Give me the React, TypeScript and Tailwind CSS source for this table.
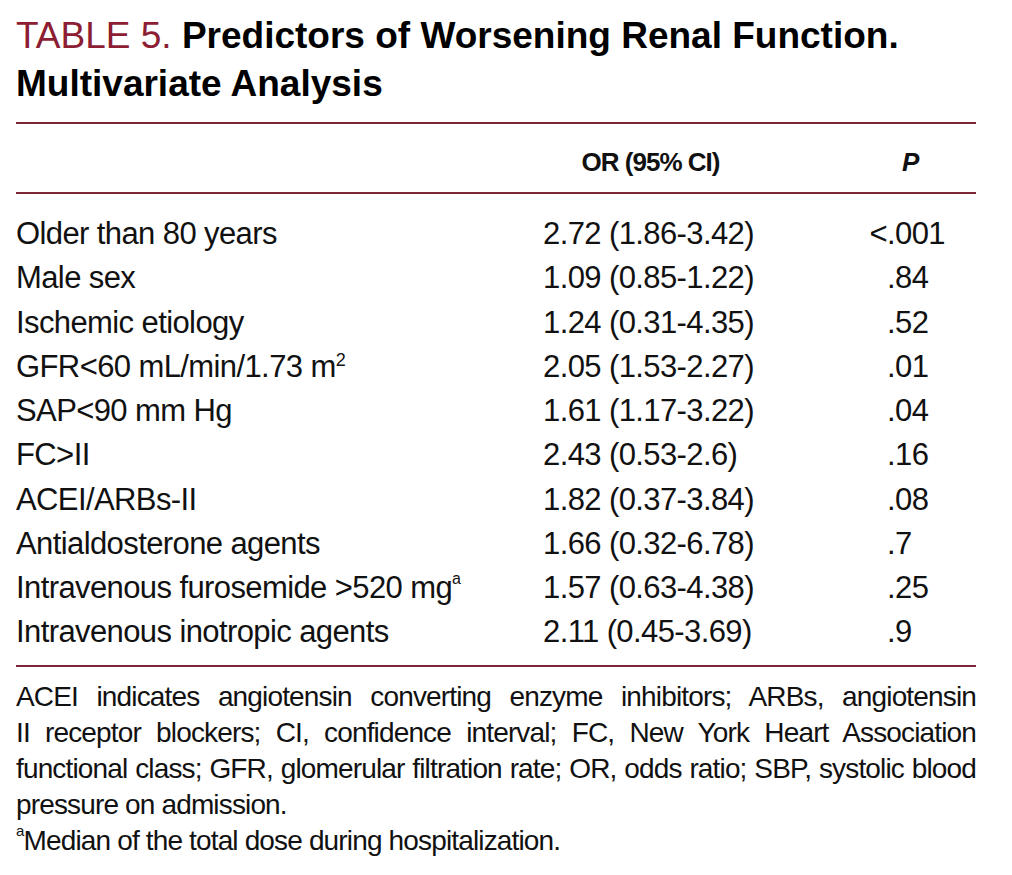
import React from "react";

type Row = {
  label: React.ReactNode;
  or: string;
  p: string;
};

const rows: Row[] = [
  { label: "Older than 80 years", or: "2.72 (1.86-3.42)", p: "<.001" },
  { label: "Male sex", or: "1.09 (0.85-1.22)", p: ".84" },
  { label: "Ischemic etiology", or: "1.24 (0.31-4.35)", p: ".52" },
  {
    label: (
      <>
        GFR&lt;60 mL/min/1.73 m<sup className="text-[18px] top-[-0.6em]">2</sup>
      </>
    ),
    or: "2.05 (1.53-2.27)",
    p: ".01",
  },
  { label: "SAP<90 mm Hg", or: "1.61 (1.17-3.22)", p: ".04" },
  { label: "FC>II", or: "2.43 (0.53-2.6)", p: ".16" },
  { label: "ACEI/ARBs-II", or: "1.82 (0.37-3.84)", p: ".08" },
  { label: "Antialdosterone agents", or: "1.66 (0.32-6.78)", p: ".7" },
  {
    label: (
      <>
        Intravenous furosemide &gt;520 mg<sup className="text-[16px] top-[-0.85em]">a</sup>
      </>
    ),
    or: "1.57 (0.63-4.38)",
    p: ".25",
  },
  { label: "Intravenous inotropic agents", or: "2.11 (0.45-3.69)", p: ".9" },
];

function PValue({ value }: { value: string }) {
  const prefix = value.startsWith("<") ? "<" : "";
  const rest = prefix ? value.slice(1) : value;
  return (
    <div className="flex">
      <span className="w-[22px] text-right">{prefix}</span>
      <span>{rest}</span>
    </div>
  );
}

export default function App() {
  return (
    <div className="min-h-[875px] bg-white text-[#111] font-['Liberation_Sans',Arial,sans-serif]">
      <div className="ml-4 w-[960px] pt-[12px]">
        <h1 className="text-[37px] leading-[48px]">
          <span className="text-[#8c1d32]">TABLE 5. </span>
          <span className="font-bold text-black">
            Predictors of Worsening Renal Function.
            <br />
            Multivariate Analysis
          </span>
        </h1>

        <div className="mt-[14px] h-[2px] bg-[#7a2637]" />

        {/* header */}
        <div className="grid grid-cols-[527px_322px_1fr] pt-[25px] pb-[17px] text-[26px] leading-[26px] font-bold tracking-[-1px]">
          <div />
          <div className="w-[215px] text-center">OR (95% CI)</div>
          <div className="pl-[37px] italic">P</div>
        </div>

        <div className="h-[2px] bg-[#7a2637]" />

        {/* body */}
        <div className="pt-[18px] text-[31px] leading-[44.25px] tracking-[-0.6px]">
          {rows.map((r, i) => (
            <div key={i} className="grid grid-cols-[527px_322px_1fr]">
              <div>{r.label}</div>
              <div>{r.or}</div>
              <PValue value={r.p} />
            </div>
          ))}
        </div>

        <div className="mt-[10px] h-[2px] bg-[#7a2637]" />

        {/* footnote */}
        <div className="mt-[12px] text-[28px] leading-[36px] tracking-[-0.85px]">
          <p className="text-justify [text-align-last:justify]">
            ACEI indicates angiotensin converting enzyme inhibitors; ARBs, angiotensin
          </p>
          <p className="text-justify [text-align-last:justify]">
            II receptor blockers; CI, confidence interval; FC, New York Heart Association
          </p>
          <p className="text-justify [text-align-last:justify]">
            functional class; GFR, glomerular filtration rate; OR, odds ratio; SBP, systolic blood
          </p>
          <p>pressure on admission.</p>
          <p>
            <sup className="text-[15px] top-[-0.9em]">a</sup>Median of the total dose during hospitalization.
          </p>
        </div>
      </div>
    </div>
  );
}
